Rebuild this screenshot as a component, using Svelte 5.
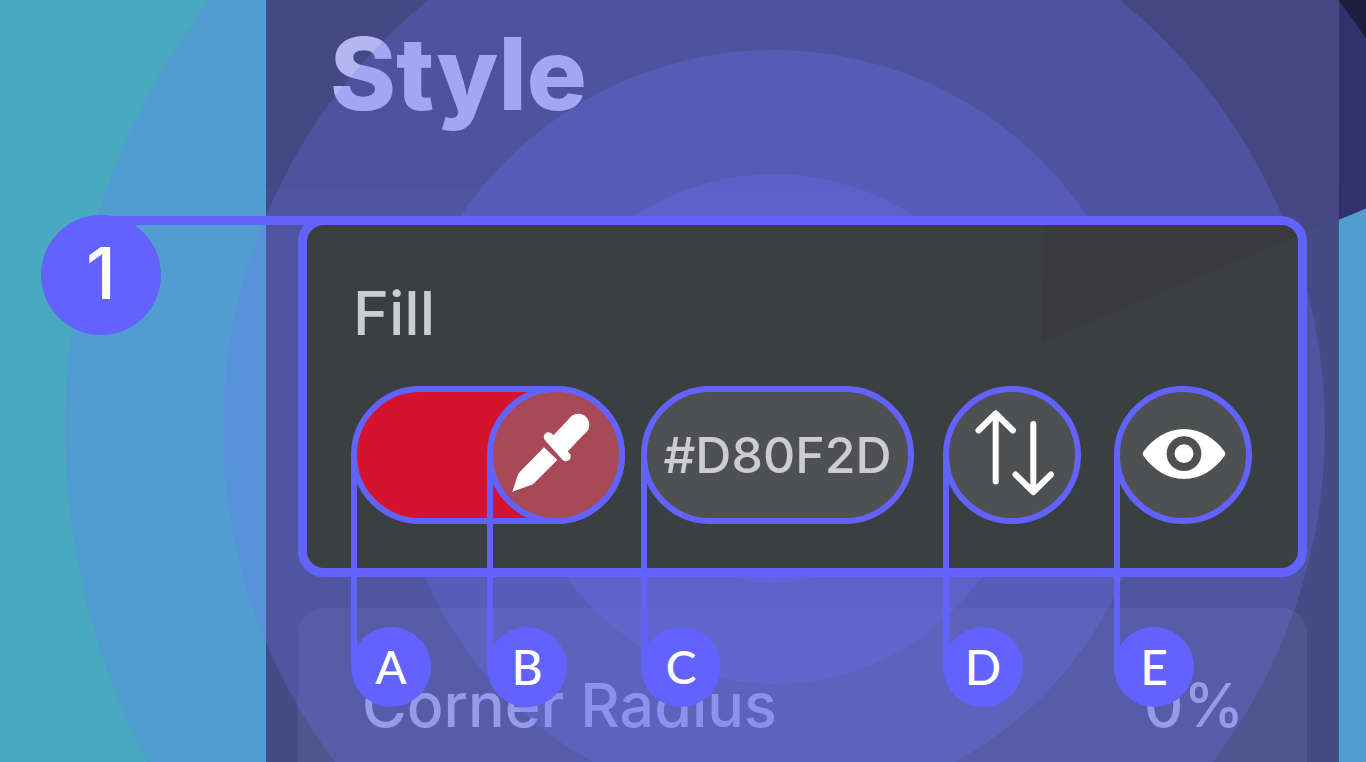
<script>
  const rings = [709, 551, 379, 255, 154];
  let hex = $state('#D80F2D');
  let visible = $state(true);
</script>

{#snippet marker(letter, light = false)}
  <span class="marker"><span class="line"></span><span class="dot" class:light>{letter}</span></span>
{/snippet}

<main class="stage">
  <div class="wedge"></div>

  <section class="panel">
    <header><h1>Style</h1></header>
    <div class="cards">
      <div class="card fill">
        <span class="step"><span class="step-line"></span><span class="step-dot">1</span></span>
        <h2>Fill</h2>
        <div class="controls">
          <div class="control color">
            <button class="swatch" style:background={hex === '#D80F2D' ? '#d5132c' : hex} aria-label="Fill colour"></button>
            <div class="control picker">
              <button class="round pick" aria-label="Pick colour">
                <svg viewBox="0 0 96 96" aria-hidden="true">
                  <path d="M4.300 84.700 L9.500 69 Q10 66.800 12 64.800 L36 40.300 L49.300 53 L26 76.300 Q25 77.300 23 78 Z" fill="#fff" />
                  <path d="M40.500 30 L58 49.500" stroke="#fff" stroke-width="9.500" stroke-linecap="round" />
                  <path d="M70.300 17.700 L50 39" stroke="#fff" stroke-width="21.500" />
                  <circle cx="70.300" cy="17.700" r="11" fill="#fff" />
                </svg>
              </button>
              {@render marker('B')}
            </div>
            {@render marker('A', true)}
          </div>

          <div class="control hex">
            <input aria-label="Hex value" bind:value={hex} />
            {@render marker('C', true)}
          </div>

          <div class="control swap">
            <button class="round" aria-label="Swap">
              <svg viewBox="0 0 96 96" fill="none" stroke="#fff" stroke-width="6" stroke-linecap="round" stroke-linejoin="round" aria-hidden="true">
                <path d="M31.700 74.500 V7 M14.500 23.500 L31.700 6.500 L49 23.500" />
                <path d="M69.300 17 V84 M51.500 67.500 L69.300 85 L87 67.500" />
              </svg>
            </button>
            {@render marker('D')}
          </div>

          <div class="control eye">
            <button class="round" aria-label="Visibility" aria-pressed={visible} onclick={() => (visible = !visible)}>
              <svg viewBox="0 0 96 96" aria-hidden="true">
                <path d="M8.500 44.500 C18 31.500 32 22 49 22 C66 22 80 31.500 89.500 44.500 Q91 46.700 89.500 49 C80 62 66 72 49 72 C32 72 18 62 8.500 49 Q7 46.700 8.500 44.500 Z" fill="#fff" />
                <circle cx="49" cy="46.700" r="13.400" fill="#fff" stroke="#4f5052" stroke-width="8" />
              </svg>
            </button>
            {@render marker('E')}
          </div>
        </div>
      </div>

      <div class="card radius">
        <span>Corner Radius</span>
        <span>0%</span>
      </div>
    </div>
  </section>

  <div class="rings" aria-hidden="true">
    <svg viewBox="-709 -709 1418 1418">
      {#each rings as r}
        <circle {r} />
      {/each}
    </svg>
  </div>
</main>

<style>
  :global(body) {
    background: #48a9c1;
  }

  .stage {
    --accent: #6262ff;
    position: relative;
    isolation: isolate;
    display: flex;
    min-height: 100vh;
    padding: 0 27px 0 266px;
    box-sizing: border-box;
    overflow: hidden;
    background: #48a9c1;
    font-family: Inter, 'Liberation Sans', sans-serif;
  }

  .wedge {
    position: absolute;
    z-index: -1;
    top: 0;
    right: 0;
    width: 323px;
    height: 342px;
    background: #1d1d3d;
    clip-path: polygon(13% 0, 100% 0, 100% 61%, 0 100%, 1% 50%);
  }

  .panel {
    flex: 1;
    display: flex;
    flex-direction: column;
    min-width: 0;
    background: rgba(57, 60, 93, 0.985);
  }

  header {
    height: 188px;
    padding: 26px 64px 0;
    box-sizing: border-box;
    background: rgba(0, 0, 0, 0.02);
  }

  h1 {
    margin: 0;
    color: #c9cbec;
    font-size: 100px;
    font-weight: 800;
    line-height: 96px;
  }

  .cards {
    flex: 1;
    display: flex;
    flex-direction: column;
    gap: 31px;
    padding: 28px 32px 0;
  }

  .fill {
    position: relative;
    z-index: 2;
    padding: 52px 44px 44px;
    border: 9px solid var(--accent);
    border-radius: 26px;
    background: #3a3f3f;
  }

  .fill::before {
    content: '';
    position: absolute;
    top: 0;
    right: 0;
    width: 256px;
    height: 117px;
    border-radius: 0 17px 0 0;
    background: #3b3b3d;
    clip-path: polygon(1% 0, 100% 0, 100% 9%, 0 100%);
  }

  h2 {
    margin: 0 0 37px;
    padding-left: 2px;
    color: #cdcdcf;
    font-size: 61px;
    font-weight: 500;
    line-height: 72px;
  }

  .controls {
    display: flex;
  }

  .control {
    position: relative;
    flex: none;
    display: flex;
    height: 138px;
  }

  .color {
    width: 274px;
  }

  .hex {
    width: 273px;
    margin-left: 16px;
  }

  .swap {
    margin-left: 29px;
  }

  .eye {
    margin-left: 33px;
  }

  button,
  input {
    box-sizing: border-box;
    height: 138px;
    margin: 0;
    padding: 0;
    border: 6px solid var(--accent);
    border-radius: 69px;
    background: #4f5052;
  }

  .swatch {
    width: 100%;
  }

  .picker {
    margin-left: -138px;
  }

  .round {
    display: grid;
    place-items: center;
    width: 138px;
  }

  .round svg {
    width: 96px;
    height: 96px;
  }

  .pick {
    background: #a84958;
  }

  input {
    width: 100%;
    color: #cdcdcf;
    font: 500 50px Inter, 'Liberation Sans', sans-serif;
    text-align: center;
  }

  .marker {
    position: absolute;
    top: 69px;
    left: 0;
    display: flex;
    flex-direction: column;
    pointer-events: none;
  }

  .line {
    width: 6px;
    height: 212px;
    background: var(--accent);
  }

  .dot {
    width: 80px;
    margin-top: -40px;
    border-radius: 50%;
    background: var(--accent);
    color: #fff;
    font: 500 48px / 80px Lato, 'Liberation Sans', sans-serif;
    text-align: center;
  }

  .dot.light {
    font-size: 46px;
  }

  .step {
    position: absolute;
    top: -10px;
    left: -266px;
  }

  .step-line {
    position: absolute;
    top: 1px;
    left: 60px;
    width: 240px;
    height: 9px;
    background: var(--accent);
  }

  .step-dot {
    display: block;
    width: 120px;
    height: 120px;
    border-radius: 50%;
    background: var(--accent);
    color: #fff;
    font: 500 72px / 116px Inter, 'Liberation Sans', sans-serif;
    text-align: center;
  }

  .radius {
    flex: 1;
    display: flex;
    justify-content: space-between;
    align-items: flex-start;
    padding: 61px 63px 21px 64px;
    border-radius: 26px 26px 0 0;
    background: rgba(255, 255, 255, 0.07);
    color: #b4b5dc;
    font-size: 61px;
    font-weight: 500;
    line-height: 72px;
  }

  .rings {
    position: absolute;
    z-index: 1;
    top: -280px;
    left: calc(50% - 618px);
    width: 1418px;
    height: 1418px;
    pointer-events: none;
  }

  .rings svg {
    display: block;
    width: 100%;
    height: 100%;
    fill: #7276ff;
    fill-opacity: 0.24;
  }
</style>
